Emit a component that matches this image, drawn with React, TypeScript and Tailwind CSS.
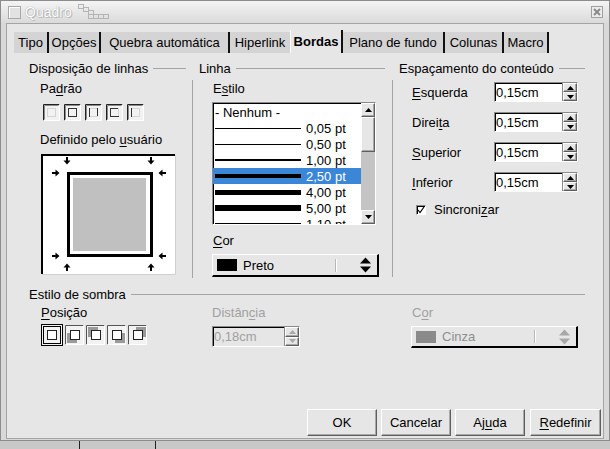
import React from "react";

// Diálogo "Quadro" – aba Bordas (estilo OpenOffice antigo)

const sunken =
  "border border-t-[#8a8a8a] border-l-[#8a8a8a] border-r-white border-b-white shadow-[inset_1px_1px_0_#000]";
const raised =
  "border border-t-white border-l-white border-r-[#5e5e5e] border-b-[#5e5e5e] shadow-[inset_-1px_-1px_0_#a8a8a8]";

function U({ c }: { c: string }) {
  return <span className="underline underline-offset-[2px]">{c}</span>;
}

function GroupTitle({ children, className = "" }: { children: React.ReactNode; className?: string }) {
  return (
    <div className={"flex h-[15px] items-center " + className}>
      <span className="whitespace-nowrap pr-[5px]">{children}</span>
      <div className="h-px flex-1 bg-[#a4a4a4]" />
    </div>
  );
}

function Tri({ up, color }: { up?: boolean; color: string }) {
  return (
    <svg width="7" height="4" viewBox="0 0 7 4">
      <path d={up ? "M0 4L3.5 0L7 4Z" : "M0 0L7 0L3.5 4Z"} fill={color} />
    </svg>
  );
}

function Spin({ disabled }: { disabled?: boolean }) {
  const c = disabled ? "#a8a8a8" : "#000";
  return (
    <div className="flex h-full w-[15px] flex-col border-l border-[#8a8a8a] bg-[#e6e6e6]">
      <div className={"flex flex-1 items-center justify-center " + raised}>
        <Tri up color={c} />
      </div>
      <div className={"flex flex-1 items-center justify-center " + raised}>
        <Tri color={c} />
      </div>
    </div>
  );
}

function NumField({ value, disabled, w }: { value: string; disabled?: boolean; w: string }) {
  return (
    <div
      className={
        "flex h-full items-stretch " +
        w +
        " " +
        sunken +
        (disabled ? " bg-[#e6e6e6] text-[#a0a0a0]" : " bg-white")
      }
    >
      <div className="flex flex-1 items-center pl-px">{value}</div>
      <Spin disabled={disabled} />
    </div>
  );
}

function DropArrows({ color }: { color: string }) {
  return (
    <svg width="11" height="16" viewBox="0 0 11 16">
      <path d="M0 6.5L5.5 0.5L11 6.5Z" fill={color} />
      <path d="M0 9.5L11 9.5L5.5 15.5Z" fill={color} />
    </svg>
  );
}

function ColorDrop({ swatch, label, disabled, h }: { swatch: string; label: string; disabled?: boolean; h: string }) {
  return (
    <div
      className={
        "flex w-[167px] items-center border-t border-l border-t-white border-l-white border-r-2 border-b-2 border-r-black border-b-black bg-[#e6e6e6] " +
        h +
        (disabled ? " text-[#8e8e8e]" : "")
      }
    >
      <div className={"ml-[4px] h-[12px] w-[20px] " + swatch} />
      <span className="ml-[6px] flex-1">{label}</span>
      <div className="h-[13px] w-px bg-[#b8b8b8] shadow-[1px_0_0_#fff]" />
      <div className="ml-[24px] mr-[6px] flex items-center">
        <DropArrows color={disabled ? "#a8a8a8" : "#000"} />
      </div>
    </div>
  );
}

function PresetIcon({ t, r, b, l }: { t?: boolean; r?: boolean; b?: boolean; l?: boolean }) {
  const on = "#333";
  const off = "#d4d4d4";
  return (
    <svg width="17" height="17" viewBox="0 0 17 17">
      <rect x="0" y="0" width="17" height="17" fill="#f2f2f2" />
      <path d="M0.5 16.5V0.5H16.5" stroke="#222" fill="none" />
      <path d="M1.5 15.5V1.5H15.5" stroke="#8a8a8a" fill="none" />
      <path d="M0.5 16.5H16.5V0.5" stroke="#fff" fill="none" />
      <line x1="4" y1="4.5" x2="13" y2="4.5" stroke={t ? on : off} />
      <line x1="12.5" y1="4" x2="12.5" y2="13" stroke={r ? on : off} />
      <line x1="4" y1="12.5" x2="13" y2="12.5" stroke={b ? on : off} />
      <line x1="4.5" y1="4" x2="4.5" y2="13" stroke={l ? on : off} />
    </svg>
  );
}

function ShadowIcon({ pos, selected }: { pos?: "br" | "tr" | "bl" | "tl"; selected?: boolean }) {
  const off: Record<string, [number, number]> = {
    br: [3, 3],
    tr: [3, -3],
    bl: [-3, 3],
    tl: [-3, -3],
  };
  const [dx, dy] = pos ? off[pos] : [0, 0];
  return (
    <svg width={selected ? 22 : 19} height="22" viewBox={selected ? "0 0 22 22" : "0 0 19 22"}>
      {selected ? (
        <>
          <rect x="0.5" y="0.5" width="21" height="21" fill="#f2f2f2" stroke="#000" />
          <rect x="2.5" y="2.5" width="17" height="17" fill="none" stroke="#000" />
          <rect x="6.5" y="6.5" width="9" height="9" fill="#fff" stroke="#222" />
        </>
      ) : (
        <>
          <rect x="0" y="1" width="19" height="20" fill="#f2f2f2" />
          <path d="M0.5 20.5V1.5H18.5" stroke="#555" fill="none" />
          <path d="M0.5 20.5H18.5V1.5" stroke="#fff" fill="none" />
          {pos && <rect x={5 + dx} y={6 + dy} width="10" height="10" fill="#9a9a9a" />}
          <rect x="5.5" y="6.5" width="9" height="9" fill="#fff" stroke="#222" />
        </>
      )}
    </svg>
  );
}

function Arrow({ x, y, rot }: { x: number; y: number; rot: number }) {
  return (
    <path
      transform={`translate(${x} ${y}) rotate(${rot})`}
      d="M-1 -4H1V-0.5H3.5L0 3.5L-3.5 -0.5H-1Z"
      fill="#000"
    />
  );
}

function Preview() {
  return (
    <svg width="135" height="121" viewBox="0 0 135 121">
      <rect x="0" y="0" width="135" height="121" fill="#fff" />
      <path d="M1 120V1H134" stroke="#000" strokeWidth="2" fill="none" />
      <path d="M0.5 120.5H134.5V0.5" stroke="#cfcfcf" fill="none" />
      <rect x="27.5" y="19.5" width="83" height="82" fill="#fff" stroke="#000" strokeWidth="3" />
      <rect x="32" y="24" width="73" height="73" fill="#c0c0c0" />
      <Arrow x={26} y={7} rot={0} />
      <Arrow x={110} y={7} rot={0} />
      <Arrow x={15} y={19} rot={-90} />
      <Arrow x={121} y={19} rot={90} />
      <Arrow x={15} y={102} rot={-90} />
      <Arrow x={121} y={102} rot={90} />
      <Arrow x={26} y={113} rot={180} />
      <Arrow x={110} y={113} rot={180} />
    </svg>
  );
}

const lines = [
  { label: "0,05 pt", h: "h-px" },
  { label: "0,50 pt", h: "h-px" },
  { label: "1,00 pt", h: "h-[2px]" },
  { label: "2,50 pt", h: "h-[4px]", sel: true },
  { label: "4,00 pt", h: "h-[5px]" },
  { label: "5,00 pt", h: "h-[6px]" },
];

function StyleList() {
  return (
    <div className={"flex h-[123px] w-[164px] bg-white " + sunken}>
      <div className="flex-1 overflow-hidden pt-px">
        <div className="flex h-[16px] items-center pl-[2px]">- Nenhum -</div>
        {lines.map((ln) => (
          <div
            key={ln.label}
            className={
              "flex h-[16px] items-center pl-[2px] " + (ln.sel ? "bg-[#3b86d7] text-white" : "")
            }
          >
            <div className={"w-[86px] bg-black " + ln.h} />
            <span className="ml-[5px]">{ln.label}</span>
          </div>
        ))}
        <div className="relative flex h-[16px] items-start pl-[2px]">
          <div className="mt-[7px] h-px w-[86px] bg-black" />
          <span className="ml-[5px] mt-[1px]">1,10 pt</span>
        </div>
      </div>
      <div className="flex w-[14px] flex-col bg-[#c4c4c4]">
        <div className={"flex h-[14px] items-center justify-center bg-[#e6e6e6] " + raised}>
          <Tri up color="#000" />
        </div>
        <div className={"h-[35px] bg-[#e6e6e6] " + raised} />
        <div className="flex-1" />
        <div className={"flex h-[14px] items-center justify-center bg-[#e6e6e6] " + raised}>
          <Tri color="#000" />
        </div>
      </div>
    </div>
  );
}

const tabs = [
  { label: "Tipo", cls: "w-[35px]" },
  { label: "Opções", cls: "w-[52px]" },
  { label: "Quebra automática", cls: "w-[129px]" },
  { label: "Hiperlink", cls: "w-[60px]", noSep: true },
  { label: "Bordas", cls: "w-[53px]", active: true },
  { label: "Plano de fundo", cls: "w-[102px]" },
  { label: "Colunas", cls: "w-[59px]" },
  { label: "Macro", cls: "w-[45px]" },
];

function TitleBar() {
  return (
    <div className="flex h-[22px] items-center bg-gradient-to-b from-[#f4f4f4] to-[#dadada]">
      <div className="ml-[7px] h-[13px] w-[13px] border border-[#a8a8a8] bg-[#e2e2e2] shadow-[inset_1px_1px_0_#fff]" />
      <span className="ml-[4px] text-[14px] text-white [text-shadow:0_0_1px_#8a8a8a,1px_1px_0_#bdbdbd]">
        Quadro
      </span>
      <svg width="40" height="20" viewBox="0 0 40 20" className="ml-[4px] mt-[2px]">
        <g fill="none" stroke="#b4b4b4">
          <rect x="2.5" y="1.5" width="5" height="4" />
          <rect x="7.5" y="4.5" width="5" height="4" />
          <rect x="12.5" y="7.5" width="5" height="4" />
          <rect x="17.5" y="11.5" width="5" height="4" />
          <rect x="22.5" y="11.5" width="5" height="4" />
          <rect x="27.5" y="11.5" width="5" height="4" />
          <rect x="12.5" y="11.5" width="5" height="4" />
        </g>
      </svg>
      <div className="flex-1" />
      <div className="mr-[6px] flex h-[12px] w-[12px] items-center justify-center border border-[#a0a0a0] bg-[#ececec]">
        <svg width="8" height="8" viewBox="0 0 8 8">
          <path d="M1 1L7 7M7 1L1 7" stroke="#8a8a8a" strokeWidth="2" />
        </svg>
      </div>
    </div>
  );
}

export default function App() {
  return (
    <div className="flex h-[449px] w-[610px] flex-col overflow-hidden bg-[#c8c8c8] font-['Liberation_Sans',Arial,sans-serif] text-[13px] leading-[15px] text-black">
      <div className="flex h-[441px] flex-col border border-[#8c8c8c] bg-[#d8d8d8]">
        <TitleBar />
        <div className="mx-[5px] mb-[1px] flex flex-1 flex-col border border-[#a4a4a4] bg-[#e6e6e6]">
          {/* onglets */}
          <div className="mt-[6px] flex h-[23px] items-end pl-[7px]">
            {tabs.map((t) =>
              t.active ? (
                <div
                  key={t.label}
                  className={
                    "flex h-[23px] items-center justify-center border-l border-r-2 border-l-white border-r-[#111] bg-[#e6e6e6] font-bold " +
                    t.cls
                  }
                >
                  {t.label}
                </div>
              ) : (
                <div
                  key={t.label}
                  className={
                    "flex h-[21px] items-center justify-center bg-[#d4d4d4] " +
                    (t.noSep ? "" : "border-r-2 border-r-[#111] ") +
                    t.cls
                  }
                >
                  {t.label}
                </div>
              )
            )}
          </div>

          {/* trois groupes */}
          <div className="mt-[8px] flex pl-[22px]">
            <div className="w-[163px]">
              <GroupTitle className="pr-[6px]">Disposição de linhas</GroupTitle>
              <div className="mt-[5px] pl-[11px]">
                <div className="h-[15px]">
                  Pa<U c="d" />rão
                </div>
                <div className="ml-[3px] mt-[8px] flex gap-[4px]">
                  <PresetIcon />
                  <PresetIcon t r b l />
                  <PresetIcon r l />
                  <PresetIcon t b l />
                  <PresetIcon l />
                </div>
                <div className="mt-[11px] h-[15px]">
                  Definido pelo <U c="u" />suário
                </div>
                <div className="ml-px mt-[7px] flex">
                  <Preview />
                </div>
              </div>
            </div>

            <div className="w-[200px]">
              <GroupTitle className="pl-[7px] pr-[7px]">Linha</GroupTitle>
              <div className="mt-[4px] border-l border-[#a4a4a4] pb-[1px] pl-[19px] pt-px">
                <div className="h-[15px] pl-px">
                  E<U c="s" />tilo
                </div>
                <div className="mt-[6px]">
                  <StyleList />
                </div>
                <div className="mt-[8px] h-[15px] pl-px">
                  <U c="C" />or
                </div>
                <div className="mt-[6px]">
                  <ColorDrop swatch="bg-black" label="Preto" h="h-[23px]" />
                </div>
              </div>
            </div>

            <div className="w-[193px]">
              <GroupTitle className="pl-[7px]">Espaçamento do conteúdo</GroupTitle>
              <div className="mt-[4px] flex h-[197px] flex-col gap-[10px] border-l border-[#a4a4a4] pl-[19px] pt-[2px]">
                {[
                  [<><U c="E" />squerda</>, "a"],
                  [<>Direi<U c="t" />a</>, "b"],
                  [<><U c="S" />uperior</>, "c"],
                  [<><U c="I" />nferior</>, "d"],
                ].map(([lab, k]) => (
                  <div key={k as string} className="flex h-[20px] items-center">
                    <div className="w-[82px]">{lab}</div>
                    <NumField value="0,15cm" w="w-[84px]" />
                  </div>
                ))}
                <div className="flex h-[15px] items-center pl-[4px]">
                  <div className={"flex h-[10px] w-[10px] items-center justify-center bg-white " + sunken}>
                    <svg width="8" height="8" viewBox="0 0 8 8">
                      <path d="M1 4L3 6.5L7 1" stroke="#000" strokeWidth="1.2" fill="none" />
                    </svg>
                  </div>
                  <span className="ml-[8px]">
                    Sincroni<U c="z" />ar
                  </span>
                </div>
              </div>
            </div>
          </div>

          {/* sombra */}
          <div className="mt-[9px] pl-[22px] pr-[18px]">
            <GroupTitle>Estilo de sombra</GroupTitle>
            <div className="mt-[3px] flex">
              <div className="w-[183px] pl-[12px]">
                <div className="h-[15px]">
                  <U c="P" />osição
                </div>
                <div className="mt-[4px] flex items-start gap-[2px]">
                  <ShadowIcon selected />
                  <ShadowIcon pos="bl" />
                  <ShadowIcon pos="tl" />
                  <ShadowIcon pos="br" />
                  <ShadowIcon pos="tr" />
                </div>
              </div>
              <div className="w-[199px] text-[#a0a0a0]">
                <div className="h-[15px]">
                  Distân<U c="c" />ia
                </div>
                <div className="mt-[6px] h-[21px]">
                  <NumField value="0,18cm" disabled w="w-[88px]" />
                </div>
              </div>
              <div className="w-[167px]">
                <div className="h-[15px] pl-px text-[#a0a0a0]">
                  C<U c="o" />r
                </div>
                <div className="mt-[6px]">
                  <ColorDrop swatch="bg-[#8a8a8a]" label="Cinza" disabled h="h-[22px]" />
                </div>
              </div>
            </div>
          </div>

          <div className="flex-1" />

          {/* botões */}
          <div className="mb-[2px] flex justify-end pr-[2px]">
            <button className={"h-[27px] w-[70px] bg-[#e6e6e6] " + raised}>OK</button>
            <button className={"ml-[4px] h-[27px] w-[70px] bg-[#e6e6e6] " + raised}>Cancelar</button>
            <button className={"ml-[4px] h-[27px] w-[70px] bg-[#e6e6e6] " + raised}>
              Aj<U c="u" />da
            </button>
            <button className={"ml-[5px] h-[27px] w-[71px] bg-[#e6e6e6] " + raised}>
              <U c="R" />edefinir
            </button>
          </div>
        </div>
      </div>

      {/* fundo abaixo da janela */}
      <div className="flex h-[8px]">
        <div className="w-[80px] border-r border-[#222]" />
        <div className="w-[76px] border-r border-[#222]" />
        <div className="flex-1" />
      </div>
    </div>
  );
}
